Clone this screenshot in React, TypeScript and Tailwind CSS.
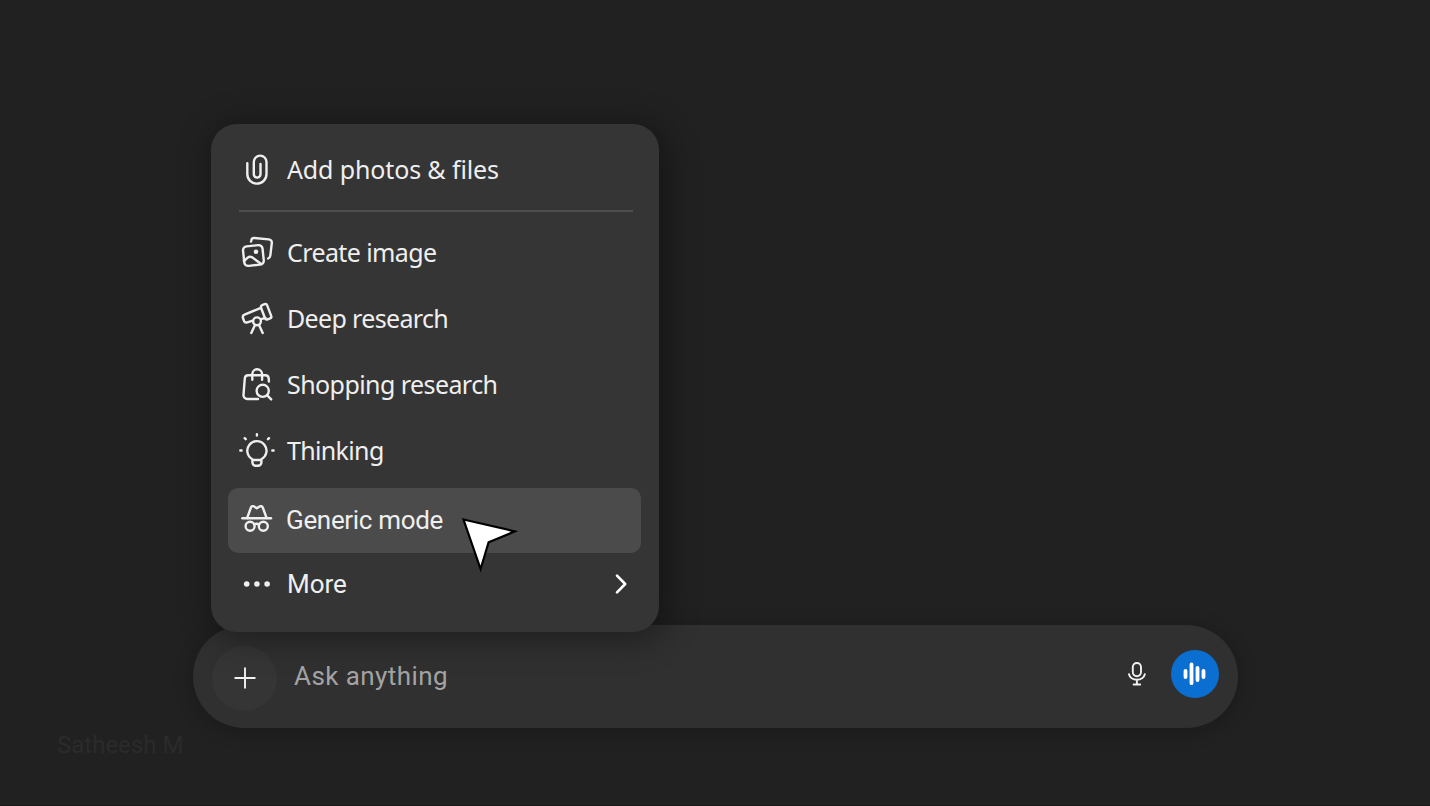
import React from 'react';
import type { ReactNode } from 'react';

type IconProps = { children: ReactNode };

const Icon = ({ children }: IconProps) => (
  <svg
    width="36"
    height="36"
    viewBox="0 0 36 36"
    fill="none"
    stroke="currentColor"
    strokeWidth="2.4"
    strokeLinecap="round"
    strokeLinejoin="round"
    className="shrink-0"
  >
    {children}
  </svg>
);

const PaperclipIcon = () => (
  <Icon>
    <path d="M8.3 11.3V22a9.6 9.6 0 0 0 19.2 0V10a6.3 6.3 0 0 0-12.7 0v12.3a3.3 3.3 0 0 0 6.7 0V12" />
  </Icon>
);

const ImagesIcon = () => (
  <Icon>
    <rect x="4.6" y="10.7" width="19.6" height="19.6" rx="4" transform="rotate(-6 14.4 20.5)" />
    <path d="M5 26l3.700-3.400c1.300-1.100 3-1.100 4.400-.3l8.800 6.400" />
    <circle cx="17" cy="16.8" r="2.3" fill="currentColor" stroke="none" />
    <path d="M12 6.500l.3-1A2.800 2.800 0 0 1 15.300 3l14.500 1.400a3.300 3.300 0 0 1 3 3.700l-1.500 12.500a3.600 3.600 0 0 1-2.200 2.900" />
  </Icon>
);

const TelescopeIcon = () => (
  <Icon>
    <rect x="23.800" y="3.200" width="6.600" height="15.200" rx="2" transform="rotate(-21 27.1 10.8)" />
    <path d="M22 6.800 5.500 13.700a2.600 2.600 0 0 0-1.500 3.300l1 2.800a2.600 2.600 0 0 0 3.200 1.600l5.600-1.700M22.200 18.200l4.300-1.300" />
    <circle cx="18" cy="20.300" r="3.900" />
    <path d="M16 24 12.300 32M20 24l3.700 8" />
  </Icon>
);

const ShoppingIcon = () => (
  <Icon>
    <path d="M19 32H8.300a3.800 3.800 0 0 1-3.800-4.100L5.800 11.400A3.500 3.500 0 0 1 9.300 8.200h16.900a3.500 3.500 0 0 1 3.500 3.200l.2 3.200" />
    <path d="M13.300 12.800V7.200a4.900 4.900 0 0 1 9.800 0v5.600" />
    <circle cx="23.700" cy="23.800" r="6.100" />
    <path d="m28.200 28.400 4 4" />
  </Icon>
);

const BulbIcon = () => (
  <Icon>
    <path d="M13.400 26.200a9.600 9.600 0 1 1 9 0v3.300a3.400 3.400 0 0 1-3.400 3.300h-2.200a3.400 3.400 0 0 1-3.400-3.300zM13.600 27h8.600" />
    <path d="M17.900 1.300v1.300M1.300 17.500h1.300M33.300 17.500h1.300M5.700 5.200l1 1M30 5.200l-1 1" />
  </Icon>
);

const IncognitoIcon = () => (
  <Icon>
    <path d="M3.400 15.200h28.600" />
    <path d="m8.200 15 3.600-10.200c.6-1.700 2.400-2.200 3.700-1.100l2.300 1.600 2.300-1.600c1.400-1 3.200-.5 3.800 1.100L27.600 15" />
    <circle cx="11.100" cy="23.300" r="4.500" />
    <circle cx="24.300" cy="23.300" r="4.500" />
    <path d="M15.200 21.500c1.500-.9 3.500-.9 5 0" />
  </Icon>
);

const DotsIcon = () => (
  <Icon>
    <g fill="currentColor" stroke="none">
      <circle cx="7.700" cy="18" r="2.800" />
      <circle cx="17.900" cy="18" r="2.800" />
      <circle cx="28.100" cy="18" r="2.800" />
    </g>
  </Icon>
);

const tools = [
  { icon: <ImagesIcon />, label: 'Create image', spacing: 'tracking-[-0.6px]' },
  { icon: <TelescopeIcon />, label: 'Deep research', spacing: 'tracking-[-0.66px]' },
  { icon: <ShoppingIcon />, label: 'Shopping research', spacing: 'tracking-[-0.57px]' },
  { icon: <BulbIcon />, label: 'Thinking', spacing: 'tracking-[-0.66px]' },
];

const ToolsMenu = () => (
  <div className="relative z-10 -mb-[7px] ml-[18px] flex h-[508px] w-[448px] flex-col rounded-[26px] bg-[#353535] px-[17px] pt-[13px] text-[#efefef] shadow-[4px_4px_32px_4px_rgba(0,0,0,0.36)]">
    <button className="flex h-[66px] items-center gap-3 pl-[11px] text-left">
      <PaperclipIcon />
      <span className="font-['Noto_Sans',sans-serif] text-[25px] tracking-[-0.13px]">Add photos &amp; files</span>
    </button>
    <div className="mt-[7px] mr-[9px] mb-2 ml-[11px] h-0.5 shrink-0 bg-[#4e4e4e]" />
    {tools.map((tool) => (
      <button key={tool.label} className="flex h-[66px] items-center gap-3 pl-[11px] text-left">
        {tool.icon}
        <span className={`font-['Noto_Sans',sans-serif] text-[25px] ${tool.spacing}`}>{tool.label}</span>
      </button>
    ))}
    <button className="relative mt-1 mr-px flex h-[65px] items-center gap-[11px] rounded-[10px] bg-[#4b4b4b] pl-[11px] text-left">
      <IncognitoIcon />
      <span className="font-[Roboto,sans-serif] text-[26px] tracking-[-0.32px]">Generic mode</span>
      <svg width="58" height="58" viewBox="0 0 58 58" className="absolute top-[27px] left-[232px]">
        <path d="M3.500 4.500 55 16.400 28.600 27.300 20.600 54z" fill="#fff" stroke="#000" strokeWidth="2.200" />
      </svg>
    </button>
    <button className="flex h-[62px] items-center gap-3 pr-3.5 pl-[11px] text-left">
      <DotsIcon />
      <span className="font-[Roboto,sans-serif] text-[26px]">More</span>
      <svg width="14" height="22" viewBox="0 0 14 22" fill="none" stroke="#fff" strokeWidth="2.600" strokeLinecap="round" strokeLinejoin="round" className="ml-auto">
        <path d="m3 2.600 8.200 8.400L3 19.400" />
      </svg>
    </button>
  </div>
);

const Composer = () => (
  <div className="flex h-[103px] items-center rounded-full bg-[#303030] pr-[19px] pl-[19px] shadow-[0_3px_18px_3px_rgba(0,0,0,0.18)]">
    <button className="mt-[3px] flex size-[65px] items-center justify-center rounded-full bg-[#353535]">
      <svg width="22" height="22" viewBox="0 0 22 22" stroke="#f2f2f2" strokeWidth="1.900">
        <path d="M11 .5v21M.5 11h21" />
      </svg>
    </button>
    <span className="mb-px ml-[17px] grow font-[Roboto,sans-serif] text-[26px] tracking-[0.42px] text-[#a3a3a3]">Ask anything</span>
    <svg width="20" height="26" viewBox="0 0 20 26" fill="none" stroke="#f2f2f2" strokeWidth="1.900" strokeLinecap="round" className="mr-6 mb-[5px]">
      <rect x="5.800" y="2" width="8.200" height="13.200" rx="4.100" />
      <path d="M2 13.300a8 6.500 0 0 0 15.800 0M9.900 19v4.300M6.600 23.500h6.600" />
    </svg>
    <button className="mb-[5px] flex size-12 items-center justify-center rounded-full bg-[#0a6fd1]">
      <svg width="24" height="24" viewBox="0 0 24 24" stroke="#fff" strokeWidth="3.800" strokeLinecap="round">
        <path d="M2.500 9v6M8.500 2.500v18.700M14.500 6v12M20.500 9v6" />
      </svg>
    </button>
  </div>
);

export default function App() {
  return (
    <main className="h-[806px] w-[1430px] overflow-hidden border-b border-[#1b191b] bg-[#212121] pt-[124px]">
      <div className="ml-[193px] w-[1045px]">
        <ToolsMenu />
        <Composer />
      </div>
      <p className="mt-[3px] ml-[57px] font-[Roboto,sans-serif] text-2xl leading-7 text-[#2b2b2b]">Satheesh M</p>
    </main>
  );
}
